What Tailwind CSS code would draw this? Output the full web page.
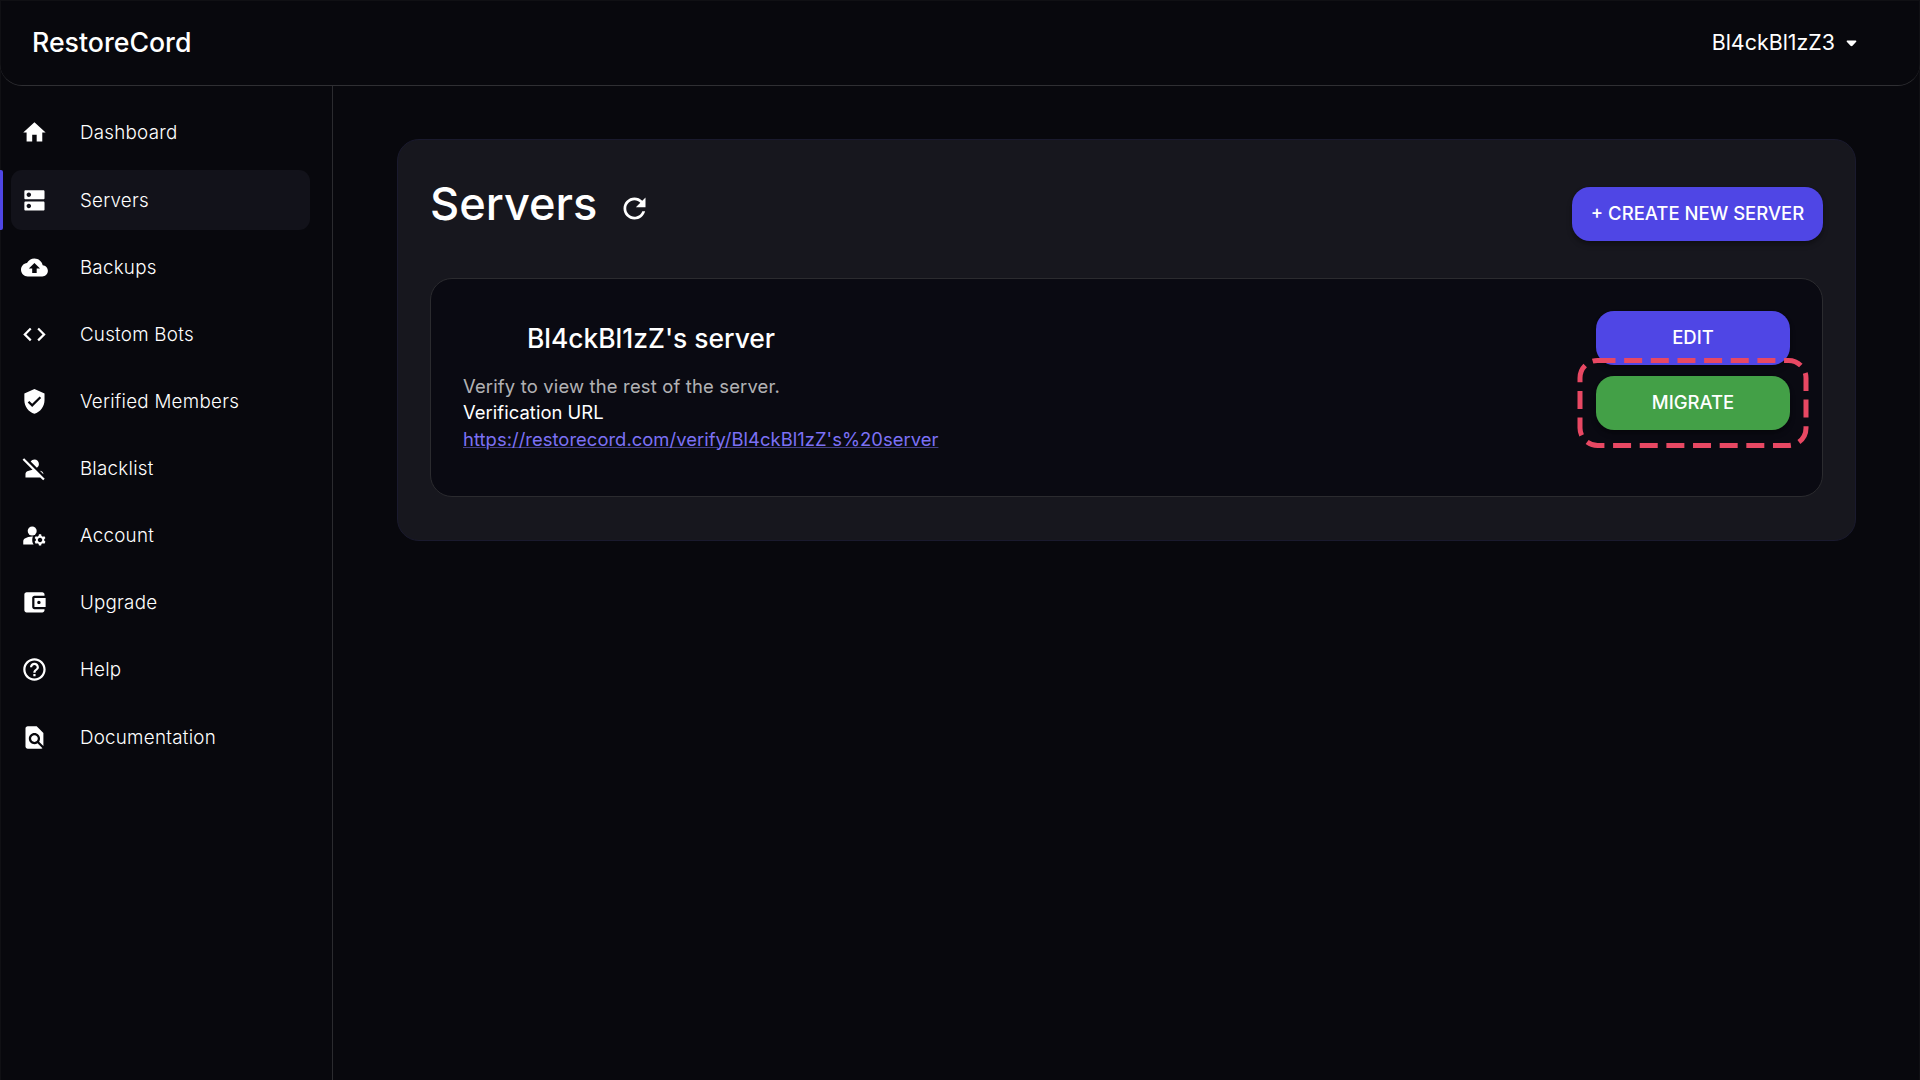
<!DOCTYPE html>
<html lang="en">
<head>
<meta charset="utf-8">
<title>RestoreCord</title>
<script src="https://cdn.jsdelivr.net/npm/@tailwindcss/browser@4"></script>
</head>
<body class="h-[1080px] w-[1920px] overflow-hidden bg-[#08080d] font-['Inter',sans-serif] text-[18.4px] leading-[26.88px] text-white">
<div class="flex h-full flex-col border border-b-0 border-[#101014]">
  <header class="-mx-px flex h-[85px] shrink-0 items-center justify-between rounded-b-[22px] border-b border-b-[#2f2f33] pr-[63px] pl-[32px]">
    <div class="-mt-[2px] text-[26.7px] font-medium">RestoreCord</div>
    <div class="flex items-center gap-[11px]">
      <span class="-mt-[2px] text-[21.4px]">Bl4ckBl1zZ3</span>
      <svg class="h-[7px] w-[11px]" viewBox="0 0 11 7" fill="#fff"><path d="M1.2.5h8.6q1 .4.4 1.3L6.5 5.7q-1 .9-2 0L.8 1.800Q.2.900 1.200.500z"/></svg>
    </div>
  </header>
  <div class="flex min-h-0 flex-1">
    <nav class="-ml-px flex w-[333px] shrink-0 flex-col gap-[7.15px] border-r border-r-[#2b2b2f] pt-[16.8px] text-[18.8px] font-light tracking-[0.26px]">
      <a class="ml-[11px] flex h-[60px] w-[299px] items-center gap-[32px] pl-[10px]"><svg class="size-[26.88px]" viewBox="0 0 24 24" fill="currentColor"><path d="M10 20v-6h4v6h5v-8h3L12 3 2 12h3v8z"/></svg><span class="pt-[2px]">Dashboard</span></a>
      <a class="relative ml-[11px] flex h-[60px] w-[299px] items-center gap-[32px] rounded-[11px] bg-[#12121a] pl-[10px]"><span class="absolute top-0 -left-[11px] h-full w-[3px] rounded-r-[2px] bg-[#4f46e5]"></span><svg class="size-[26.88px]" viewBox="0 0 24 24" fill="currentColor"><path d="M20 13H4c-.55 0-1 .45-1 1v6c0 .55.45 1 1 1h16c.55 0 1-.45 1-1v-6c0-.55-.45-1-1-1zM7 19c-1.1 0-2-.9-2-2s.9-2 2-2 2 .9 2 2-.9 2-2 2zM20 3H4c-.55 0-1 .45-1 1v6c0 .55.45 1 1 1h16c.55 0 1-.45 1-1V4c0-.55-.45-1-1-1zM7 9c-1.1 0-2-.9-2-2s.9-2 2-2 2 .9 2 2-.9 2-2 2z"/></svg><span class="pt-[2px]">Servers</span></a>
      <a class="ml-[11px] flex h-[60px] w-[299px] items-center gap-[32px] pl-[10px]"><svg class="size-[26.88px]" viewBox="0 0 24 24" fill="currentColor"><path d="M19.35 10.04C18.67 6.59 15.64 4 12 4 9.11 4 6.6 5.64 5.35 8.04 2.34 8.36 0 10.91 0 14c0 3.31 2.69 6 6 6h13c2.76 0 5-2.24 5-5 0-2.64-2.05-4.78-4.65-4.96zM14 13v4h-4v-4H7l5-5 5 5h-3z"/></svg><span class="pt-[2px]">Backups</span></a>
      <a class="ml-[11px] flex h-[60px] w-[299px] items-center gap-[32px] pl-[10px]"><svg class="size-[26.88px]" viewBox="0 0 24 24" fill="currentColor"><path d="M9.4 16.6 4.8 12l4.6-4.6L8 6l-6 6 6 6 1.4-1.4zm5.2 0 4.6-4.6-4.6-4.6L16 6l6 6-6 6-1.4-1.4z"/></svg><span class="pt-[2px]">Custom Bots</span></a>
      <a class="ml-[11px] flex h-[60px] w-[299px] items-center gap-[32px] pl-[10px]"><svg class="size-[26.88px]" viewBox="0 0 24 24" fill="currentColor"><path d="M12 1 3 5v6c0 5.55 3.84 10.74 9 12 5.16-1.26 9-6.45 9-12V5l-9-4zm-2 16-4-4 1.41-1.41L10 14.17l6.59-6.59L18 9l-8 8z"/></svg><span class="pt-[2px]">Verified Members</span></a>
      <a class="ml-[11px] flex h-[60px] w-[299px] items-center gap-[32px] pl-[10px]"><svg class="size-[26.88px]" viewBox="0 0 24 24" fill="currentColor"><path d="M8.65 5.82C9.36 4.72 10.6 4 12 4c2.21 0 4 1.79 4 4 0 1.4-.72 2.64-1.82 3.35L8.65 5.82zM20 17.17c-.02-1.1-.63-2.11-1.61-2.62-.54-.28-1.13-.54-1.77-.76L20 17.17zm1.19 4.02L2.81 2.81 1.39 4.22l8.89 8.89c-1.81.23-3.39.79-4.67 1.45-1 .51-1.61 1.54-1.61 2.66V20h13.17l2.61 2.61 1.41-1.42z"/></svg><span class="pt-[2px]">Blacklist</span></a>
      <a class="ml-[11px] flex h-[60px] w-[299px] items-center gap-[32px] pl-[10px]"><svg class="size-[26.88px]" viewBox="0 0 24 24" fill="currentColor"><circle cx="10" cy="8" r="4"/><path d="M10.67 13.02C10.45 13.01 10.23 13 10 13c-2.42 0-4.68.67-6.61 1.82-.88.52-1.39 1.5-1.39 2.53V20h9.26c-.79-1.13-1.26-2.51-1.26-4 0-1.07.25-2.07.67-2.98zM20.75 16c0-.22-.03-.42-.06-.63l1.14-1.01-1-1.73-1.45.49c-.32-.27-.68-.48-1.08-.63L18 11h-2l-.3 1.49c-.4.15-.76.36-1.08.63l-1.45-.49-1 1.73 1.14 1.01c-.03.21-.06.41-.06.63s.03.42.06.63l-1.14 1.01 1 1.73 1.45-.49c.32.27.68.48 1.08.63L16 21h2l.3-1.49c.4-.15.76-.36 1.08-.63l1.45.49 1-1.73-1.14-1.01c.03-.21.06-.41.06-.63zM17 18c-1.1 0-2-.9-2-2s.9-2 2-2 2 .9 2 2-.9 2-2 2z"/></svg><span class="pt-[2px]">Account</span></a>
      <a class="ml-[11px] flex h-[60px] w-[299px] items-center gap-[32px] pl-[10px]"><svg class="size-[26.88px]" viewBox="0 0 24 24" fill="currentColor"><path d="M21 18v1c0 1.1-.9 2-2 2H5c-1.11 0-2-.9-2-2V5c0-1.1.89-2 2-2h14c1.1 0 2 .9 2 2v1h-9c-1.11 0-2 .9-2 2v8c0 1.1.89 2 2 2h9zm-9-2h10V8H12v8zm4-2.5c-.83 0-1.5-.67-1.5-1.5s.67-1.5 1.5-1.5 1.5.67 1.5 1.5-.67 1.5-1.5 1.5z"/></svg><span class="pt-[2px]">Upgrade</span></a>
      <a class="ml-[11px] flex h-[60px] w-[299px] items-center gap-[32px] pl-[10px]"><svg class="size-[26.88px]" viewBox="0 0 24 24" fill="currentColor"><path d="M11 18h2v-2h-2v2zm1-16C6.48 2 2 6.48 2 12s4.48 10 10 10 10-4.48 10-10S17.52 2 12 2zm0 18c-4.41 0-8-3.59-8-8s3.59-8 8-8 8 3.59 8 8-3.59 8-8 8zm0-14c-2.21 0-4 1.79-4 4h2c0-1.1.9-2 2-2s2 .9 2 2c0 2-3 1.75-3 5h2c0-2.25 3-2.5 3-5 0-2.21-1.79-4-4-4z"/></svg><span class="pt-[2px]">Help</span></a>
      <a class="ml-[11px] flex h-[60px] w-[299px] items-center gap-[32px] pl-[10px]"><svg class="size-[26.88px]" viewBox="0 0 24 24" fill="currentColor"><path d="M20 19.59V8l-6-6H6c-1.1 0-1.99.9-1.99 2L4 20c0 1.1.89 2 1.99 2H18c.45 0 .85-.15 1.19-.4l-4.43-4.43c-.8.52-1.74.83-2.76.83-2.76 0-5-2.24-5-5s2.24-5 5-5 5 2.24 5 5c0 1.02-.31 1.96-.83 2.75L20 19.59zM9 13c0 1.66 1.34 3 3 3s3-1.34 3-3-1.34-3-3-3-3 1.34-3 3z"/></svg><span class="pt-[2px]">Documentation</span></a>
    </nav>
    <main class="flex-1 pt-[53px] pr-[63px] pl-[64px]">
      <section class="h-[402px] rounded-[22px] border border-[#1a1a2e] bg-[#17171e] px-[32px]">
        <div class="flex h-[138px] items-start justify-between">
          <div class="flex items-center pt-[37px]">
            <h1 class="text-[45.2px] leading-[54px] font-medium">Servers</h1>
            <svg class="mt-[9px] ml-[21px] size-[33px]" viewBox="0 0 24 24" fill="currentColor"><path d="M17.65 6.35C16.2 4.900 14.210 4 12 4c-4.420 0-7.990 3.580-7.990 8s3.570 8 7.990 8c3.730 0 6.840-2.550 7.730-6h-2.080c-.82 2.330-3.040 4-5.650 4-3.310 0-6-2.690-6-6s2.690-6 6-6c1.660 0 3.140.69 4.220 1.780L13 11h7V4l-2.350 2.350z"/></svg>
          </div>
          <button class="mt-[47px] h-[54px] w-[251px] rounded-[18px] bg-[#4f46e5] pb-[2px] text-[18.5px] font-medium shadow-md shadow-black/30">+ CREATE NEW SERVER</button>
        </div>
        <article class="flex h-[219px] justify-between rounded-[22px] border border-[#2b2b2f] bg-[#0a0a12] px-[32px] pt-[32px]">
          <div>
            <h2 class="mt-[7px] mb-[14.5px] ml-[64px] text-[26.4px] leading-[40px] font-medium">Bl4ckBl1zZ's server</h2>
            <p class="tracking-[0.18px] text-white/70">Verify to view the rest of the server.</p>
            <p class="-mt-[0.5px] tracking-[0.05px]">Verification URL</p>
            <a class="tracking-[0.04px] text-[#7c71f5] underline decoration-[#7c71f5]/50 decoration-1">https://restorecord.com/verify/Bl4ckBl1zZ's%20server</a>
          </div>
          <div class="relative flex w-[194px] flex-col gap-[11px] text-[18.5px] font-medium">
            <button class="h-[54px] rounded-[18px] bg-[#4f46e5] pb-[2px] shadow-md shadow-black/30">EDIT</button>
            <button class="h-[54px] rounded-[18px] bg-[#43a047] pb-[2px] shadow-md shadow-black/30">MIGRATE</button>
            <svg class="absolute top-[46px] -left-[19px] h-[92px] w-[232px]" viewBox="0 0 232 92" fill="none" stroke="#e84863" stroke-width="5" stroke-dasharray="18 8.65"><path d="M20.500 3.500h191a17.500 17.500 0 0 1 17.500 17.500v50a17.500 17.500 0 0 1-17.500 17.500h-191a17.500 17.500 0 0 1-17.500-17.500v-50a17.500 17.500 0 0 1 17.500-17.500"/></svg>
          </div>
        </article>
      </section>
    </main>
  </div>
</div>
</body>
</html>
